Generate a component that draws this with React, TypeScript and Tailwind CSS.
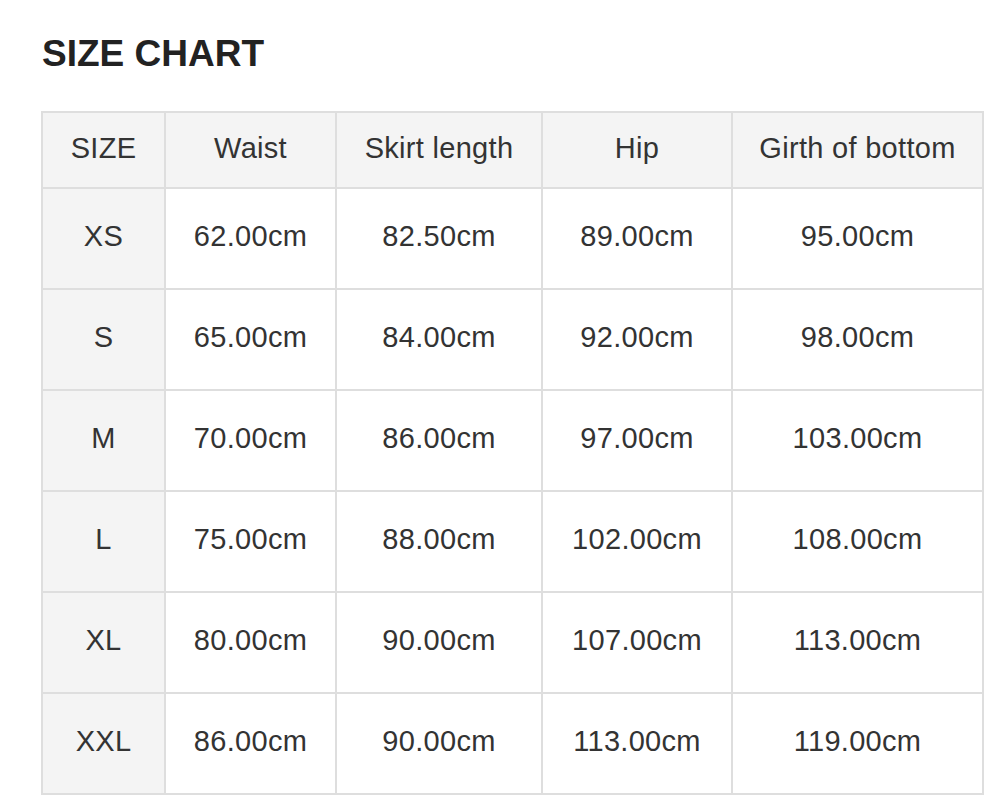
const HEADERS = ["SIZE", "Waist", "Skirt length", "Hip", "Girth of bottom"];

const ROWS: string[][] = [
  ["XS", "62.00cm", "82.50cm", "89.00cm", "95.00cm"],
  ["S", "65.00cm", "84.00cm", "92.00cm", "98.00cm"],
  ["M", "70.00cm", "86.00cm", "97.00cm", "103.00cm"],
  ["L", "75.00cm", "88.00cm", "102.00cm", "108.00cm"],
  ["XL", "80.00cm", "90.00cm", "107.00cm", "113.00cm"],
  ["XXL", "86.00cm", "90.00cm", "113.00cm", "119.00cm"],
];

export default function App() {
  return (
    <div className="w-[1000px] h-[800px] overflow-hidden bg-white pl-[41px] pt-[32px] font-['Liberation_Sans',Arial,sans-serif] text-[#333]">
      <h1 className="text-[37px] font-bold leading-[44px] text-[#222] pl-px">SIZE CHART</h1>

      {/* size table */}
      <table className="mt-[35px] w-[941px] table-fixed border-collapse text-center text-[29px] tracking-[0.3px]">
        <colgroup>
          <col className="w-[123px]" />
          <col className="w-[171px]" />
          <col className="w-[206px]" />
          <col className="w-[190px]" />
          <col className="w-[251px]" />
        </colgroup>
        <thead>
          <tr className="h-[76px] bg-[#f4f4f4]">
            {HEADERS.map((h) => (
              <th key={h} className="border-2 border-[#dedede] font-normal px-1 pb-[2px]">
                {h}
              </th>
            ))}
          </tr>
        </thead>
        <tbody>
          {ROWS.map((row) => (
            <tr key={row[0]} className="h-[101px]">
              {row.map((cell, i) => (
                <td
                  key={i}
                  className={
                    "border-2 border-[#dedede] pb-[3px] " + (i === 0 ? "bg-[#f4f4f4]" : "bg-white")
                  }
                >
                  {cell}
                </td>
              ))}
            </tr>
          ))}
        </tbody>
      </table>
    </div>
  );
}
